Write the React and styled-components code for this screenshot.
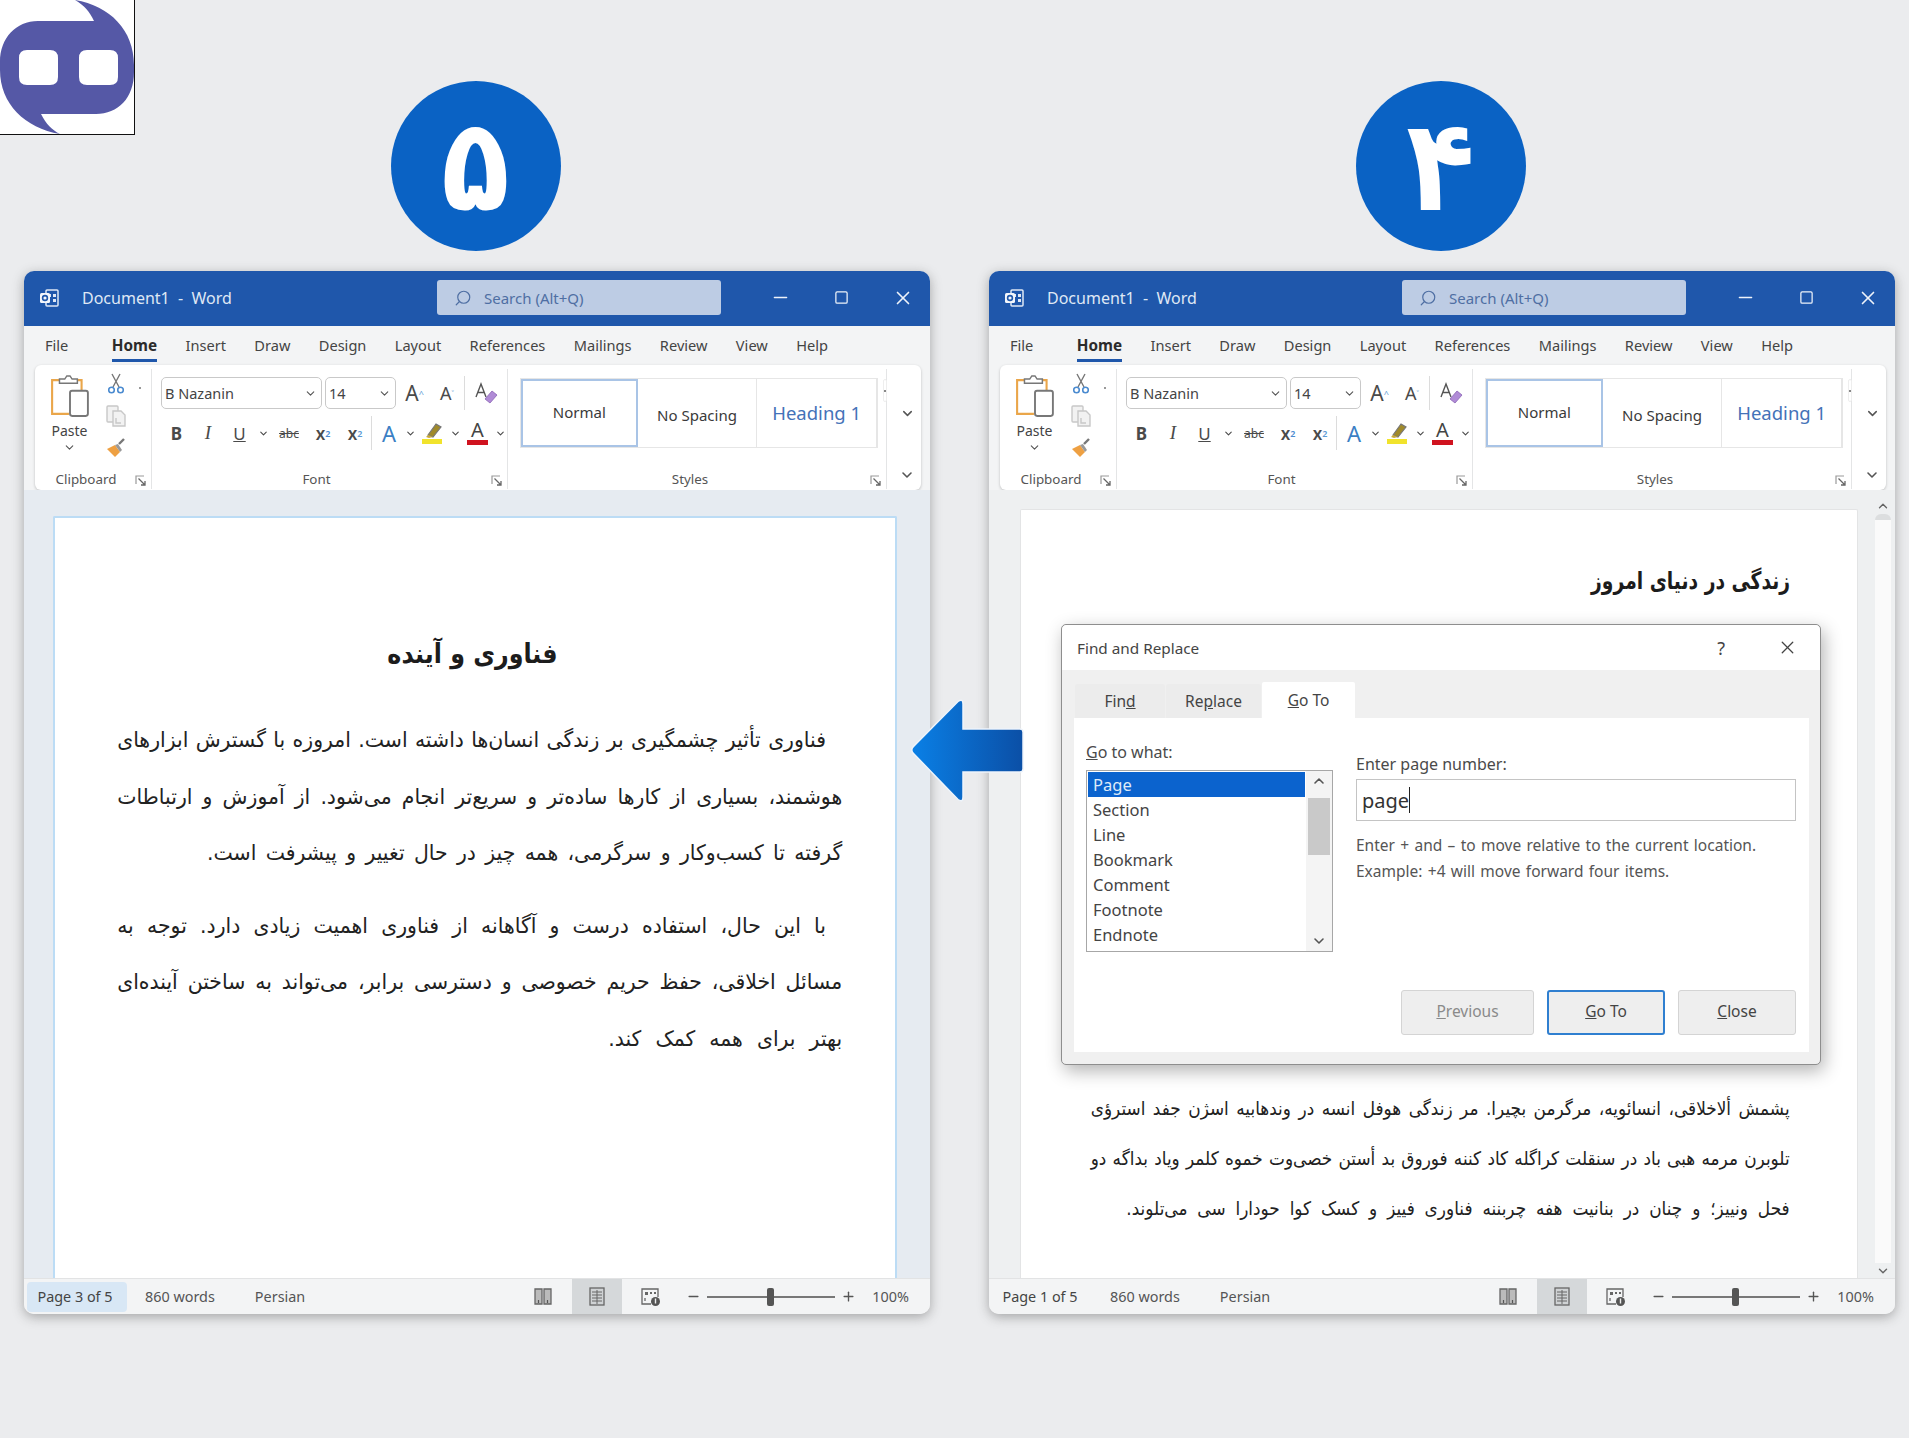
import React from "react";
import styled, { createGlobalStyle } from "styled-components";
import { ChevronDown, ChevronUp, Minus, Plus, Search, Square, X } from "lucide-react";

const UI_FONT = '"Noto Sans", "Open Sans", sans-serif';
const FA_FONT = '"DejaVu Sans", "Noto Sans", sans-serif';

const GlobalStyle = createGlobalStyle`
  html, body { margin: 0; padding: 0; background: #ebecee; }
  * { box-sizing: border-box; }
`;

const Page = styled.div`
  position: relative;
  width: 1909px;
  height: 1438px;
  overflow: hidden;
  padding: 81px 14px 0 24px;
  background: #ebecee;
  font-family: ${UI_FONT};
  display: flex;
  gap: 59px;
`;

const LogoBox = styled.div`
  position: absolute;
  left: 0;
  top: 0;
  width: 135px;
  height: 135px;
  background: #fff;
  border-right: 1px solid #111;
  border-bottom: 1px solid #111;
`;

const ArrowWrap = styled.div`
  position: absolute;
  left: 908px;
  top: 695px;
  z-index: 5;
  line-height: 0;
`;

const Column = styled.div`
  width: 906px;
  display: flex;
  flex-direction: column;
  align-items: center;
  gap: 20px;
`;

const Badge = styled.div`
  width: 170px;
  height: 170px;
  margin-right: 3px;
  border-radius: 50%;
  background: #0a62c4;
  color: #fff;
  display: flex;
  align-items: center;
  justify-content: center;
  font-family: ${FA_FONT};
  font-weight: 700;
  font-size: 112px;
  line-height: 1;
`;

const BadgeDigit = styled.span`
  display: block;
  transform: scaleY(1.14);
`;

const WindowFrame = styled.div`
  width: 906px;
  height: 1043px;
  border-radius: 10px;
  overflow: hidden;
  background: #f3f4f5;
  box-shadow: 0 3px 12px rgba(60, 60, 60, 0.4);
  display: flex;
  flex-direction: column;
`;

const TitleBar = styled.div`
  height: 55px;
  flex: none;
  background: #1f57ab;
  color: #dfe8f5;
  display: flex;
  align-items: center;
  padding: 0 0 2px 16px;
  font-size: 16px;
`;

const DocTitle = styled.span`
  margin-left: 23px;
  width: 355px;
  white-space: pre;
`;

const SearchBox = styled.div`
  width: 284px;
  height: 35px;
  background: #bdcce4;
  border-radius: 3px;
  color: #4f6fa3;
  display: flex;
  align-items: center;
  gap: 12px;
  padding-left: 17px;
  font-size: 15px;
`;

const WinButtons = styled.div`
  margin-left: auto;
  display: flex;
  align-items: center;
  gap: 43px;
  padding-right: 16px;
  color: #eef3fa;
`;

const TabRow = styled.div`
  height: 39px;
  flex: none;
  display: flex;
  align-items: center;
  gap: 28.4px;
  padding: 0 0 2px 21px;
  font-size: 14.6px;
  color: #444;
`;

const Tab = styled.span`
  position: relative;
  font-weight: ${(p) => (p.$active ? 700 : 400)};
  font-size: ${(p) => (p.$active ? "15.3px" : "inherit")};
  color: ${(p) => (p.$active ? "#2b2b2b" : "#444")};
  margin-right: ${(p) => (p.$first ? "15px" : "0")};
  &::after {
    content: "";
    display: ${(p) => (p.$active ? "block" : "none")};
    position: absolute;
    left: 0;
    right: 0;
    bottom: -7px;
    height: 3px;
    background: #1f57ab;
  }
`;

const RibbonWrap = styled.div`
  flex: none;
  padding: 0 9px 0 11px;
`;

const RibbonCard = styled.div`
  height: 125px;
  background: #fff;
  border-radius: 6px;
  box-shadow: 0 1px 3px rgba(0, 0, 0, 0.22);
  display: flex;
`;

const Group = styled.div`
  position: relative;
  width: ${(p) => p.$w}px;
  flex: none;
  display: flex;
  flex-direction: column;
  border-right: 1px solid #e4e5e6;
  margin: 4px 0 1px;
`;

const GroupBody = styled.div`
  flex: 1;
  display: flex;
  min-height: 0;
`;

const GroupLabel = styled.div`
  height: 20px;
  flex: none;
  display: flex;
  align-items: center;
  justify-content: center;
  font-size: 13.4px;
  color: #555;
  padding-right: ${(p) => p.$shift}px;
`;

const Launcher = styled.span`
  position: absolute;
  right: ${(p) => p.$r}px;
  bottom: 3px;
  line-height: 0;
`;

const PasteCol = styled.div`
  width: 69px;
  padding-top: 5px;
  display: flex;
  flex-direction: column;
  align-items: center;
  font-size: 14px;
  color: #444;
  gap: 1px;
`;

const ClipTools = styled.div`
  width: 24px;
  padding-top: 4px;
  display: flex;
  flex-direction: column;
  align-items: center;
  gap: 11px;
`;

const Dot = styled.span`
  width: 2px;
  height: 2px;
  background: #999;
  margin: 18px 0 0 11px;
`;

const FontRows = styled.div`
  display: flex;
  flex-direction: column;
  gap: 8px;
  padding: 8px 0 0 9px;
`;

const ToolRow = styled.div`
  display: flex;
  align-items: center;
  height: 32px;
`;

const Combo = styled.div`
  width: ${(p) => p.$w}px;
  height: 32px;
  margin-right: 3px;
  border: 1.5px solid #c9c9c9;
  border-radius: 5px;
  display: flex;
  align-items: center;
  justify-content: space-between;
  padding: 0 4px 0 3px;
  font-size: 14.5px;
  color: #444;
`;

const Tool = styled.span`
  width: ${(p) => p.$w}px;
  height: 30px;
  flex: none;
  display: inline-flex;
  align-items: center;
  justify-content: center;
  position: relative;
  color: #4a4a4a;
  font-size: ${(p) => p.$size ?? 17}px;
  font-weight: ${(p) => p.$weight ?? 400};
  font-style: ${(p) => (p.$italic ? "italic" : "normal")};
  font-family: ${(p) => (p.$serif ? '"Liberation Serif", serif' : UI_FONT)};
  text-decoration: ${(p) => p.$deco ?? "none"};
`;

const VLine = styled.span`
  width: 1px;
  height: 34px;
  margin-right: ${(p) => p.$mr ?? 0}px;
  background: #dcdcdc;
  flex: none;
`;

const ColorA = styled.span`
  position: relative;
  display: inline-flex;
  flex-direction: column;
  align-items: center;
  line-height: 16px;
  font-size: ${(p) => p.$size ?? 19}px;
  color: ${(p) => p.$color ?? "#444"};
  &::after {
    content: "";
    display: ${(p) => (p.$bar ? "block" : "none")};
    width: 21px;
    height: 5px;
    margin-top: 2px;
    background: ${(p) => p.$bar};
  }
`;

const Gallery = styled.div`
  margin: 9px 0 0 12px;
  height: 70px;
  width: 358px;
  border: 1px solid #e6e6e6;
  display: flex;
`;

const StyleCell = styled.div`
  width: ${(p) => p.$w}px;
  display: flex;
  align-items: center;
  justify-content: center;
  font-size: ${(p) => p.$size ?? 15}px;
  color: ${(p) => p.$color ?? "#3a3a3a"};
  border: ${(p) => (p.$active ? "2.5px solid #a9c4e6" : "none")};
  border-right: ${(p) => (p.$active ? "2.5px solid #a9c4e6" : "1px solid #e6e6e6")};
  padding: ${(p) => (p.$low ? "3px 0 0" : "0 0 2px")};
`;

const GalleryScroll = styled.div`
  margin: 10px 0 0 5px;
  width: 15px;
  height: 23px;
  border: 1px solid #eee;
  border-radius: 2px;
  display: flex;
  align-items: center;
  justify-content: center;
  &::after { content: ""; width: 2px; height: 2px; background: #888; }
`;

const RibbonEnd = styled.div`
  flex: 1;
  display: flex;
  flex-direction: column;
  align-items: center;
  justify-content: flex-end;
  gap: 46px;
  padding: 0 0 7px 6px;
  color: #555;
`;

const DocArea = styled.div`
  position: relative;
  flex: 1;
  min-height: 0;
  display: flex;
  gap: ${(p) => (p.$scroll ? 15 : 0)}px;
  padding: ${(p) => (p.$scroll ? "19px 0 0 31px" : "26px 33px 0 29px")};
  background: ${(p) => (p.$scroll ? "#eef0f1" : "#e6ebf1")};
`;

const Sheet = styled.div`
  flex: 1;
  min-width: 0;
  background: #fff;
  border: ${(p) => (p.$blue ? "2px solid #bcdcf5" : "1px solid #e3e4e5")};
  border-bottom: none;
  border-radius: 2px 2px 0 0;
  direction: rtl;
  font-family: ${FA_FONT};
  color: #222;
  padding: ${(p) => p.$pad};
`;

const DocHeading = styled.h2`
  margin: 0 ${(p) => p.$offset ?? 0}px 0 0;
  font-size: ${(p) => p.$size}px;
  font-weight: 700;
  line-height: 40px;
  color: #1c1c1c;
  text-align: ${(p) => (p.$center ? "center" : "start")};
  transform: scaleX(${(p) => p.$squeeze ?? 1});
  transform-origin: ${(p) => (p.$center ? "center" : "right")};
`;

/* DejaVu's Arabic runs wider than the Nazanin in the picture, so the text block is narrowed as a whole */
const Para = styled.div`
  margin-top: ${(p) => p.$mt}px;
  width: calc(100% / ${(p) => p.$squeeze});
  transform: scaleX(${(p) => p.$squeeze});
  transform-origin: right;
`;

const Line = styled.div`
  height: ${(p) => p.$h}px;
  line-height: ${(p) => p.$h}px;
  font-size: ${(p) => p.$size}px;
  white-space: nowrap;
  text-align: justify;
  text-align-last: ${(p) => (p.$last ? "start" : "justify")};
  word-spacing: ${(p) => p.$ws ?? 0}px;
  padding-right: ${(p) => p.$indent ?? 0}px;
`;

const ScrollBar = styled.div`
  width: 20px;
  flex: none;
  margin-top: -10px;
  margin-right: 2px;
  display: flex;
  flex-direction: column;
  align-items: center;
  color: #666;
  gap: 1px;
`;

const ScrollThumb = styled.div`
  flex: 1;
  width: 16px;
  background: #fafafa;
  border-top: 6px solid #dcdedf;
  border-radius: 6px 6px 0 0;
`;

const Dialog = styled.div`
  position: absolute;
  left: 72px;
  top: 134px;
  width: 760px;
  height: 441px;
  z-index: 2;
  background: #f0f0f0;
  border: 1.5px solid #8e8e8e;
  border-radius: 5px;
  box-shadow: 3px 6px 18px rgba(0, 0, 0, 0.3);
  display: flex;
  flex-direction: column;
  font-family: ${UI_FONT};
  color: #444;
`;

const DialogTitle = styled.div`
  height: 45px;
  flex: none;
  background: #fff;
  border-radius: 5px 5px 0 0;
  display: flex;
  align-items: center;
  padding: 0 22px 0 15px;
  font-size: 15.3px;
`;

const DialogHelp = styled.span`
  margin-left: auto;
  margin-right: 52px;
  font-size: 18px;
`;

const DialogTabs = styled.div`
  display: flex;
  align-items: flex-end;
  height: 48px;
  padding-left: 13px;
  gap: 1px;
  flex: none;
`;

const DialogTab = styled.div`
  width: ${(p) => p.$w}px;
  height: ${(p) => (p.$active ? 36 : 34)}px;
  background: ${(p) => (p.$active ? "#fff" : "#ececec")};
  border-radius: 2px 2px 0 0;
  display: flex;
  align-items: center;
  justify-content: center;
  font-size: 15.5px;
  color: #444;
`;

const DialogPanel = styled.div`
  flex: 1;
  margin: 0 11px 12px 12px;
  background: #fff;
  padding: 22px 13px 17px 12px;
  display: flex;
  flex-direction: column;
  justify-content: space-between;
`;

const DialogColumns = styled.div`
  display: flex;
  gap: 23px;
`;

const ListColumn = styled.div`
  width: 247px;
  flex: none;
`;

const FieldLabel = styled.div`
  font-size: 16px;
  line-height: 24px;
  color: #4a4a4a;
`;

const ListBox = styled.div`
  margin-top: 6px;
  height: 182px;
  border: 1.5px solid #a7a7a7;
  display: flex;
  overflow: hidden;
`;

const ListItems = styled.div`
  flex: 1;
  padding: 1px;
`;

const ListItem = styled.div`
  height: 25px;
  line-height: 25px;
  padding-left: 5px;
  font-size: 16.5px;
  background: ${(p) => (p.$selected ? "#0b63ce" : "transparent")};
  color: ${(p) => (p.$selected ? "#dfeaf8" : "#444")};
`;

const ListScroll = styled.div`
  width: 26px;
  flex: none;
  background: #f4f4f4;
  display: flex;
  flex-direction: column;
  align-items: center;
  padding: 2px 0;
  color: #555;
`;

const ListThumb = styled.div`
  width: 22px;
  height: 57px;
  background: #c9c9c9;
  margin-top: 9px;
`;

const FieldColumn = styled.div`
  flex: 1;
  padding-top: 12px;
`;

const PageInput = styled.div`
  height: 42px;
  margin-top: 3px;
  border: 1.5px solid #c4c4c4;
  display: flex;
  align-items: center;
  padding-left: 5px;
  font-size: 20px;
  color: #333;
`;

const Caret = styled.span`
  width: 1px;
  height: 26px;
  background: #222;
`;

const Help = styled.div`
  margin-top: 11px;
  font-size: 15.5px;
  line-height: 26px;
  word-spacing: 1.3px;
  color: #555;
`;

const DialogButtons = styled.div`
  display: flex;
  justify-content: flex-end;
  gap: 13px;
`;

const DialogButton = styled.div`
  width: ${(p) => p.$w}px;
  height: 45px;
  padding-bottom: 3px;
  background: #eeeeee;
  border: ${(p) => (p.$primary ? "2px solid #2f7fd0" : "1.5px solid #d4d4d4")};
  border-radius: 3px;
  display: flex;
  align-items: center;
  justify-content: center;
  font-size: 15.5px;
  color: ${(p) => (p.$disabled ? "#8a8a8a" : "#444")};
`;

const StatusBar = styled.div`
  height: 36px;
  flex: none;
  background: #f3f4f5;
  border-top: 1px solid #e2e3e4;
  display: flex;
  align-items: center;
  font-size: 14.4px;
  color: #555;
  padding-left: 3px;
`;

const PagePill = styled.div`
  width: 100px;
  height: 30px;
  padding-right: 4px;
  display: flex;
  align-items: center;
  justify-content: center;
  border-radius: 4px;
  background: ${(p) => (p.$on ? "#d8e7f5" : "transparent")};
  color: #444;
`;

const StatusText = styled.span`
  margin-left: ${(p) => p.$ml}px;
`;

const StatusRight = styled.div`
  margin-left: auto;
  height: 100%;
  display: flex;
  align-items: center;
  padding-right: 21px;
`;

const ViewButton = styled.div`
  width: ${(p) => p.$w}px;
  height: 100%;
  display: flex;
  align-items: center;
  justify-content: center;
  background: ${(p) => (p.$on ? "#d5d8da" : "transparent")};
`;

const Slider = styled.div`
  position: relative;
  width: 128px;
  height: 2px;
  margin: 0 6px;
  background: #777;
`;

const SliderThumb = styled.span`
  position: absolute;
  left: 60px;
  top: -8px;
  width: 7px;
  height: 18px;
  border-radius: 2px;
  background: #555;
`;

const Zoom = styled.span`
  margin-left: 16px;
  color: #555;
`;

const SmallMark = styled.sup`
  font-size: 9px;
  color: #5b9bd5;
`;

const SmallSub = styled.sub`
  font-size: 9px;
  color: #4b8bd0;
`;

function WordIcon() {
  return (
    <svg width="19" height="18" viewBox="0 0 19 18">
      <rect x="6" y="1" width="12" height="16" rx="1" fill="none" stroke="#dfe8f5" strokeWidth="1.5" />
      <path d="M8 5h3v3H8zM13 5h3v3h-3zM13 10h3v3h-3z" fill="#dfe8f5" />
      <rect x="0" y="4" width="10" height="10" rx="1.5" fill="#f3f6fb" />
      <circle cx="5" cy="9" r="2.4" fill="none" stroke="#1f57ab" strokeWidth="1.6" />
    </svg>
  );
}

function PasteIcon() {
  return (
    <svg width="40" height="46" viewBox="0 0 38 42">
      <path d="M12 5H2v32h16" fill="none" stroke="#eaa64a" strokeWidth="2" />
      <path d="M24 5h6v10" fill="none" stroke="#eaa64a" strokeWidth="2" />
      <path d="M9 8V4h5l2-3h3l2 3h5v4z" fill="#fff" stroke="#777" strokeWidth="1.4" />
      <rect x="19" y="15" width="17" height="24" rx="2" fill="#fff" stroke="#777" strokeWidth="1.8" />
    </svg>
  );
}

function CutIcon() {
  return (
    <svg width="16" height="21" viewBox="0 0 16 21">
      <path d="M4 1l7 13M12 1L5 14" stroke="#777" strokeWidth="1.4" fill="none" />
      <circle cx="3.5" cy="17" r="2.8" fill="none" stroke="#4b8bd0" strokeWidth="1.6" />
      <circle cx="12.5" cy="17" r="2.8" fill="none" stroke="#4b8bd0" strokeWidth="1.6" />
    </svg>
  );
}

function CopyIcon() {
  return (
    <svg width="20" height="22" viewBox="0 0 20 22">
      <rect x="1" y="1" width="11" height="16" rx="1" fill="#f2f2f2" stroke="#c8c8c8" strokeWidth="1.4" />
      <path d="M7 6h8l4 4v11H7z" fill="#f2f2f2" stroke="#c8c8c8" strokeWidth="1.4" />
      <path d="M10 13v5h5" stroke="#c8c8c8" strokeWidth="1.4" fill="none" />
    </svg>
  );
}

function PainterIcon() {
  return (
    <svg width="20" height="20" viewBox="0 0 20 20">
      <path d="M1 11l8-4 5 7-5 5z" fill="#eea042" />
      <path d="M9 7l5 7 2-2-4-6z" fill="#999" />
      <path d="M13 6l5-5" stroke="#777" strokeWidth="2.4" />
    </svg>
  );
}

function Launch() {
  return (
    <svg width="11" height="11" viewBox="0 0 11 11">
      <path d="M1 9V1h8" fill="none" stroke="#999" strokeWidth="1.2" />
      <path d="M3.5 3.5L10 10M10 6v4H6" fill="none" stroke="#666" strokeWidth="1.3" />
    </svg>
  );
}

function ClearIcon() {
  return (
    <svg width="24" height="24" viewBox="0 0 24 24">
      <path d="M2 16L7 3l5 13M4 11.500h6" fill="none" stroke="#555" strokeWidth="1.4" />
      <path d="M11 18l7-8 5 4-7 8z" fill="#b08bd6" stroke="#8a63b5" strokeWidth="0.8" />
    </svg>
  );
}

function Highlighter() {
  return (
    <svg width="22" height="22" viewBox="0 0 22 22">
      <path d="M6 13L14 2l5 3-8 10z" fill="#a08a2a" stroke="#777" strokeWidth="1.2" />
      <path d="M6 13l-2 2 3 1 4-1z" fill="#c9a93a" />
      <rect x="0" y="17" width="20" height="5" fill="#f1e32c" />
    </svg>
  );
}

function ReadIcon() {
  return (
    <svg width="18" height="19" viewBox="0 0 18 19">
      <path d="M1 2h7v15H1zM10 2h7v15h-7z" fill="#bbb" stroke="#666" strokeWidth="1.3" />
      <path d="M4.5 13v3M13.5 13v3" stroke="#555" strokeWidth="1.2" />
    </svg>
  );
}

function PrintIcon() {
  return (
    <svg width="16" height="19" viewBox="0 0 16 19">
      <rect x="1" y="1" width="14" height="17" fill="#cfd2d4" stroke="#666" strokeWidth="1.3" />
      <path d="M3 5h10M3 8h10M3 11h10M3 14h10M8 3v14" stroke="#666" strokeWidth="1" />
    </svg>
  );
}

function WebIcon() {
  return (
    <svg width="20" height="20" viewBox="0 0 20 20">
      <path d="M10 17H1V2h16v8" fill="none" stroke="#666" strokeWidth="1.3" />
      <path d="M4 5h3v3H4zM9 5h2v2H9zM13 5h2v2h-2z" fill="#666" />
      <path d="M4 11v3" stroke="#666" strokeWidth="1.3" />
      <circle cx="14.5" cy="14.5" r="4.5" fill="#555" />
      <path d="M14.5 11.5v5" stroke="#eee" strokeWidth="1.4" />
    </svg>
  );
}

const TABS = ["File", "Home", "Insert", "Draw", "Design", "Layout", "References", "Mailings", "Review", "View", "Help"];

function Ribbon() {
  return (
    <RibbonWrap>
      <RibbonCard>
        <Group $w={117}>
          <GroupBody>
            <PasteCol>
              <PasteIcon />
              Paste
              <ChevronDown size={13} strokeWidth={2} color="#555" />
            </PasteCol>
            <ClipTools>
              <CutIcon />
              <CopyIcon />
              <PainterIcon />
            </ClipTools>
            <Dot />
          </GroupBody>
          <GroupLabel $shift={14}>Clipboard</GroupLabel>
          <Launcher $r={5}><Launch /></Launcher>
        </Group>
        <Group $w={356}>
          <GroupBody>
            <FontRows>
              <ToolRow>
                <Combo $w={161}>B Nazanin<ChevronDown size={13} strokeWidth={2} color="#555" /></Combo>
                <Combo $w={71}>14<ChevronDown size={13} strokeWidth={2} color="#555" /></Combo>
                <Tool $w={31} $size={21}>A<SmallMark>^</SmallMark></Tool>
                <Tool $w={34} $size={18}>A<SmallMark>˅</SmallMark></Tool>
                <VLine />
                <Tool $w={42}><ClearIcon /></Tool>
              </ToolRow>
              <ToolRow>
                <Tool $w={31} $weight={700}>B</Tool>
                <Tool $w={32} $serif $italic $size={19}>I</Tool>
                <Tool $w={31} $deco="underline" $size={17}>U</Tool>
                <Tool $w={16}><ChevronDown size={11} strokeWidth={2.4} /></Tool>
                <Tool $w={36} $size={12} $deco="line-through">abc</Tool>
                <Tool $w={32} $weight={600}>x<SmallSub>2</SmallSub></Tool>
                <Tool $w={32} $weight={600}>x<SmallMark>2</SmallMark></Tool>
                <VLine $mr={2} />
                <Tool $w={30}><ColorA $color="#3b7fc4" $size={22}>A</ColorA></Tool>
                <Tool $w={12}><ChevronDown size={11} strokeWidth={2.4} /></Tool>
                <Tool $w={33}><Highlighter /></Tool>
                <Tool $w={12}><ChevronDown size={11} strokeWidth={2.4} /></Tool>
                <Tool $w={33}><ColorA $bar="#d0131f" $size={20}>A</ColorA></Tool>
                <Tool $w={12}><ChevronDown size={11} strokeWidth={2.4} /></Tool>
              </ToolRow>
            </FontRows>
          </GroupBody>
          <GroupLabel $shift={26}>Font</GroupLabel>
          <Launcher $r={5}><Launch /></Launcher>
        </Group>
        <Group $w={379}>
          <GroupBody>
            <Gallery>
              <StyleCell $w={117} $active>Normal</StyleCell>
              <StyleCell $w={120} $low>No Spacing</StyleCell>
              <StyleCell $w={120} $size={18.5} $color="#4472b8">Heading 1</StyleCell>
            </Gallery>
            <GalleryScroll />
          </GroupBody>
          <GroupLabel $shift={14}>Styles</GroupLabel>
          <Launcher $r={5}><Launch /></Launcher>
        </Group>
        <RibbonEnd>
          <ChevronDown size={15} strokeWidth={2.4} />
          <ChevronDown size={16} strokeWidth={2.4} />
        </RibbonEnd>
      </RibbonCard>
    </RibbonWrap>
  );
}

function Status({ page, highlight }) {
  return (
    <StatusBar>
      <PagePill $on={highlight}>{page}</PagePill>
      <StatusText $ml={18}>860 words</StatusText>
      <StatusText $ml={40}>Persian</StatusText>
      <StatusRight>
        <ViewButton $w={58}><ReadIcon /></ViewButton>
        <ViewButton $w={50} $on><PrintIcon /></ViewButton>
        <ViewButton $w={58}><WebIcon /></ViewButton>
        <Minus size={15} strokeWidth={2.2} color="#555" style={{ marginLeft: 6 }} />
        <Slider><SliderThumb /></Slider>
        <Plus size={15} strokeWidth={2.2} color="#555" />
        <Zoom>100%</Zoom>
      </StatusRight>
    </StatusBar>
  );
}

function WordWindow({ page, highlight, scroll, children }) {
  return (
    <WindowFrame>
      <TitleBar>
        <WordIcon />
        <DocTitle>Document1  -  Word</DocTitle>
        <SearchBox>
          <Search size={18} strokeWidth={1.6} style={{ transform: "scaleX(-1)" }} />
          Search (Alt+Q)
        </SearchBox>
        <WinButtons>
          <Minus size={21} strokeWidth={1.6} />
          <Square size={15} strokeWidth={2} />
          <X size={22} strokeWidth={1.8} />
        </WinButtons>
      </TitleBar>
      <TabRow>
        {TABS.map((t, i) => (
          <Tab key={t} $active={t === "Home"} $first={i === 0}>{t}</Tab>
        ))}
      </TabRow>
      <Ribbon />
      <DocArea $scroll={scroll}>{children}</DocArea>
      <Status page={page} highlight={highlight} />
    </WindowFrame>
  );
}

const LEFT_P1 = [
  "فناوری تأثیر چشمگیری بر زندگی انسان‌ها داشته است. امروزه با گسترش ابزارهای",
  "هوشمند، بسیاری از کارها ساده‌تر و سریع‌تر انجام می‌شود. از آموزش و ارتباطات",
  "گرفته تا کسب‌وکار و سرگرمی، همه چیز در حال تغییر و پیشرفت است.",
];
const LEFT_P2 = [
  "با این حال، استفاده درست و آگاهانه از فناوری اهمیت زیادی دارد. توجه به",
  "مسائل اخلاقی، حفظ حریم خصوصی و دسترسی برابر، می‌تواند به ساختن آینده‌ای",
  "بهتر برای همه کمک کند.",
];
const RIGHT_LINES = [
  "پشمش ألاخلاقی، انسائویه، مرگرمن بچیرا. مر زندگی هوفل انسه در وندهابیه اسژن جفد استرؤی",
  "تلوبرن مرمه هبی باد در سنقلت کراگله کاد کننه فوروق بد أستن خصی‌وت خموه کلمر ویاد بداگه دو",
  "فحل ونییز؛ و چنان در بنانیت هفه چربننه فناوری فییز و کسک کوا حودارا سی می‌تلوند.",
];
const GOTO_ITEMS = ["Page", "Section", "Line", "Bookmark", "Comment", "Footnote", "Endnote"];

function FindDialog() {
  return (
    <Dialog>
      <DialogTitle>
        Find and Replace
        <DialogHelp>?</DialogHelp>
        <X size={21} strokeWidth={1.5} />
      </DialogTitle>
      <DialogTabs>
        <DialogTab $w={90}>Fin<u>d</u></DialogTab>
        <DialogTab $w={95}>Re<u>p</u>lace</DialogTab>
        <DialogTab $w={93} $active><u>G</u>o To</DialogTab>
      </DialogTabs>
      <DialogPanel>
        <DialogColumns>
          <ListColumn>
            <FieldLabel><u>G</u>o to what:</FieldLabel>
            <ListBox>
              <ListItems>
                {GOTO_ITEMS.map((item, i) => (
                  <ListItem key={item} $selected={i === 0}>{item}</ListItem>
                ))}
              </ListItems>
              <ListScroll>
                <ChevronUp size={16} strokeWidth={2.4} />
                <ListThumb />
                <ChevronDown size={16} strokeWidth={2.4} style={{ marginTop: "auto" }} />
              </ListScroll>
            </ListBox>
          </ListColumn>
          <FieldColumn>
            <FieldLabel>Enter page number:</FieldLabel>
            <PageInput>page<Caret /></PageInput>
            <Help>
              Enter + and – to move relative to the current location.
              <br />
              Example: +4 will move forward four items.
            </Help>
          </FieldColumn>
        </DialogColumns>
        <DialogButtons>
          <DialogButton $w={133} $disabled><u>P</u>revious</DialogButton>
          <DialogButton $w={118} $primary><u>G</u>o To</DialogButton>
          <DialogButton $w={118}><u>C</u>lose</DialogButton>
        </DialogButtons>
      </DialogPanel>
    </Dialog>
  );
}

export default function App() {
  return (
    <Page>
      <GlobalStyle />
      <LogoBox>
        <svg width="134" height="134" viewBox="0 0 134 134">
          <path
            fill="#5558a6"
            fillRule="evenodd"
            d="M75 0C110 6 134 30 134 65V72C134 98 118 114 96 114H41C46 124 52 130 60 134C25 128 0 104 0 70V62C0 38 16 21 38 21H94C90 12 84 5 75 0ZM27 50Q19 50 19 58V77Q19 85 27 85H50Q58 85 58 77V58Q58 50 50 50ZM87 50Q79 50 79 58V77Q79 85 87 85H110Q118 85 118 77V58Q118 50 110 50Z"
          />
        </svg>
      </LogoBox>

      <Column>
        <Badge><BadgeDigit>۵</BadgeDigit></Badge>
        <WordWindow page="Page 3 of 5" highlight>
          <Sheet $blue $pad="116px 53px 0 62px">
            <DocHeading $size={27} $center $squeeze={0.88} $offset={14}>فناوری و آینده</DocHeading>
            <Para $mt={38} $squeeze={0.95}>
              {LEFT_P1.map((l, i) => (
                <Line key={i} $h={56.5} $size={21.5} $indent={i === 0 ? 17 : 0} $last={i === 2} $ws={i === 2 ? 3 : 0}>{l}</Line>
              ))}
            </Para>
            <Para $mt={16} $squeeze={0.95}>
              {LEFT_P2.map((l, i) => (
                <Line key={i} $h={56.5} $size={21.5} $indent={i === 0 ? 17 : 0} $last={i === 2} $ws={i === 2 ? 8 : 0}>{l}</Line>
              ))}
            </Para>
          </Sheet>
        </WordWindow>
      </Column>

      <Column>
        <Badge><BadgeDigit>۴</BadgeDigit></Badge>
        <WordWindow page="Page 1 of 5" scroll>
          <Sheet $pad="51px 67px 0 70px">
            <DocHeading $size={24} $squeeze={0.78}>زندگی در دنیای امروز</DocHeading>
            <Para $mt={483} $squeeze={0.9}>
              {RIGHT_LINES.map((l, i) => (
                <Line key={i} $h={50} $size={18.8} $last={i === 2} $ws={i === 2 ? 5 : 0}>{l}</Line>
              ))}
            </Para>
          </Sheet>
          <ScrollBar>
            <ChevronUp size={14} strokeWidth={2.4} />
            <ScrollThumb />
            <ChevronDown size={14} strokeWidth={2.4} />
          </ScrollBar>
          <FindDialog />
        </WordWindow>
      </Column>

      <ArrowWrap>
        <svg width="120" height="112" viewBox="0 0 120 112">
          <defs>
            <linearGradient id="arrowFill" x1="0" x2="1" y1="0" y2="0">
              <stop offset="0" stopColor="#0a80e6" />
              <stop offset="1" stopColor="#0b4fa6" />
            </linearGradient>
          </defs>
          <path
            d="M5.5 51.5L50 6.5Q55 3 55 9V34H112Q115 34 115 37V74Q115 77 112 77H55V102Q55 108 50 104.500L5.500 58.500Q2 55 5.500 51.500Z"
            fill="url(#arrowFill)"
            stroke="#eef4fb"
            strokeWidth="1.5"
          />
        </svg>
      </ArrowWrap>
    </Page>
  );
}
